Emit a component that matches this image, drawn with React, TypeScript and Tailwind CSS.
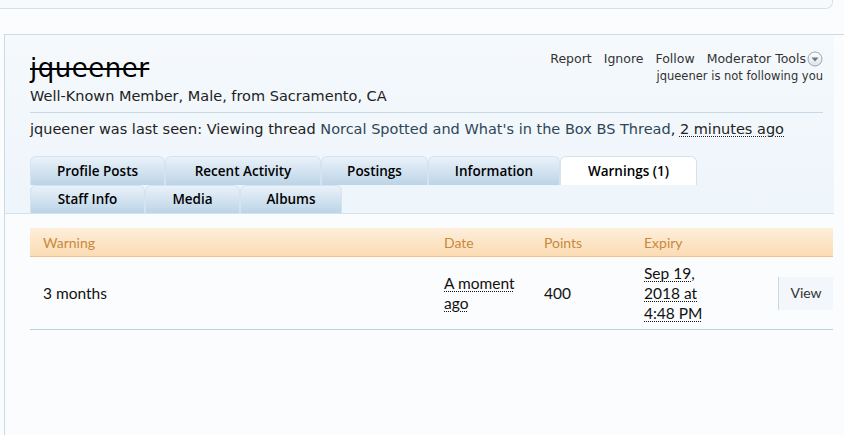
const tabsTop = [
  { label: "Profile Posts", w: "w-[135px]" },
  { label: "Recent Activity", w: "w-[156px]" },
  { label: "Postings", w: "w-[107px]" },
  { label: "Information", w: "w-[132px]" },
];

const tabsBottom = [
  { label: "Staff Info", w: "w-[115px]" },
  { label: "Media", w: "w-[95px]" },
  { label: "Albums", w: "w-[102px]" },
];

const Tab = ({ label, w, active }: { label: string; w: string; active?: boolean }) => (
  <div
    className={`${w} h-full flex items-center justify-center rounded-t-[6px] border border-b-0 border-[#d5e3ee] text-[13.5px] font-semibold text-black ${
      active ? "bg-white" : "bg-gradient-to-b from-[#eaf2f9] to-[#bcd4e7]"
    }`}
    style={{ fontFamily: '"Open Sans", sans-serif' }}
  >
    {label}
  </div>
);

const Dotted = ({ children }: { children: React.ReactNode }) => (
  <span className="underline decoration-dotted decoration-1 underline-offset-2">{children}</span>
);

export default function App() {
  return (
    <div className="min-h-screen bg-[#fbfcfe] overflow-hidden" style={{ fontFamily: '"DejaVu Sans", Verdana, sans-serif' }}>
      {/* top box */}
      <div className="h-[9px] mr-[11px] bg-[#f7fafd] border-b border-r border-[#d5e1e9] rounded-br-[7px]" />

      <div className="mt-[25px] ml-[4px] h-[420px] border-l border-t border-[#c9dbe6]">
        {/* profile header */}
        <div className="w-[829px] bg-gradient-to-b from-[#f5f9fc] to-[#eef5fb] border-b border-[#d3e2ec] pl-[25px] pr-[11px]">
          <div className="flex justify-between pt-[16px]">
            <div>
              <div className="text-[26px] leading-[34px] text-black line-through decoration-2 tracking-[0.5px]">jqueener</div>
              <div className="text-[14.5px] leading-[20px] text-[#222] mt-[1px]">Well-Known Member, Male, from Sacramento, CA</div>
            </div>
            <div className="flex flex-col items-end text-[12.5px] leading-[16px] text-[#333]">
              <div className="flex items-center">
                <span className="mr-[12px]">Report</span>
                <span className="mr-[12px]">Ignore</span>
                <span className="mr-[12px]">Follow</span>
                <span>Moderator Tools</span>
                <svg width="16" height="16" viewBox="0 0 16 16" className="ml-[1px]">
                  <defs>
                    <linearGradient id="g" x1="0" y1="0" x2="0" y2="1">
                      <stop offset="0" stopColor="#ffffff" />
                      <stop offset="1" stopColor="#dde3ea" />
                    </linearGradient>
                  </defs>
                  <circle cx="8" cy="8" r="7" fill="url(#g)" stroke="#9aa5b1" strokeWidth="1" />
                  <path d="M4.5 6.5 L11.5 6.5 L8 10.5 Z" fill="#6b7785" />
                </svg>
              </div>
              <div className="text-[11.5px] mt-[1px]">jqueener is not following you</div>
            </div>
          </div>
          <div className="border-t border-[#c6d9e4] mt-[6px]" />
          <div className="text-[14.5px] leading-[20px] text-[#222] pt-[6px]">
            jqueener was last seen: Viewing thread <span className="text-[#2e4658]">Norcal Spotted and What's in the Box BS Thread</span>, <Dotted>2 minutes ago</Dotted>
          </div>
          <div className="mt-[17px]">
            <div className="flex h-[29px]">
              {tabsTop.map((t) => (
                <Tab key={t.label} {...t} />
              ))}
              <Tab label="Warnings (1)" w="w-[137px]" active />
            </div>
            <div className="flex h-[28px]">
              {tabsBottom.map((t) => (
                <Tab key={t.label} {...t} />
              ))}
            </div>
          </div>
        </div>

        {/* warnings table */}
        <div className="ml-[25px] mt-[14px] w-[803px]" style={{ fontFamily: 'Lato, "Open Sans", sans-serif' }}>
          <div className="grid grid-cols-[401px_100px_100px_147px_55px] h-[29px] items-center bg-gradient-to-b from-[#fdeedb] to-[#fcdcb3] border-b border-[#f3c187] text-[14px] text-[#c8893c]">
            <div className="pl-[13px]">Warning</div>
            <div className="pl-[13px]">Date</div>
            <div className="pl-[13px]">Points</div>
            <div className="pl-[13px]">Expiry</div>
            <div />
          </div>
          <div className="grid grid-cols-[401px_100px_100px_147px_55px] h-[73px] items-center border-b border-[#bcd2da] text-[15.5px] leading-[20px] text-[#111]">
            <div className="pl-[13px]">3 months</div>
            <div className="pl-[13px]">
              <Dotted>A moment</Dotted>
              <br />
              <Dotted>ago</Dotted>
            </div>
            <div className="pl-[13px]">400</div>
            <div className="pl-[13px]">
              <Dotted>Sep 19,</Dotted>
              <br />
              <Dotted>2018 at</Dotted>
              <br />
              <Dotted>4:48 PM</Dotted>
            </div>
            <div className="h-[33px] flex items-center justify-center bg-[#f3f7fb] border-l border-[#c6d9e4] text-[14px] text-[#333]">View</div>
          </div>
        </div>
      </div>
    </div>
  );
}
